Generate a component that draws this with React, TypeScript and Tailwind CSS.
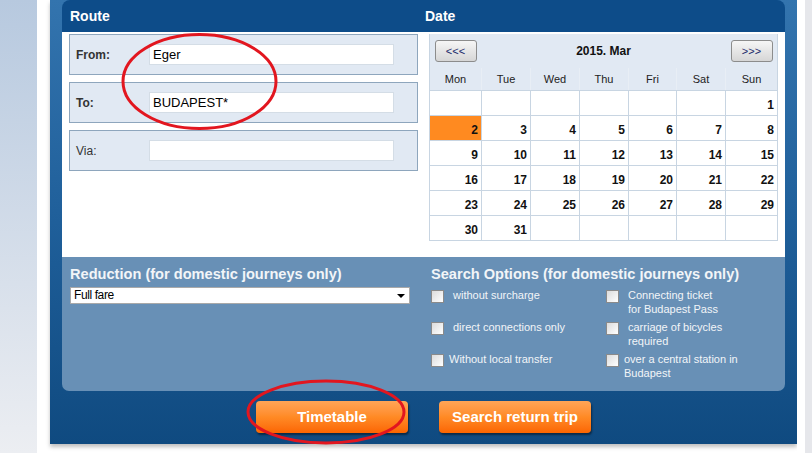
import React from 'react';

const days = ['Mon', 'Tue', 'Wed', 'Thu', 'Fri', 'Sat', 'Sun'];

const cells: (number | null)[] = [
  null, null, null, null, null, null, 1,
  2, 3, 4, 5, 6, 7, 8,
  9, 10, 11, 12, 13, 14, 15,
  16, 17, 18, 19, 20, 21, 22,
  23, 24, 25, 26, 27, 28, 29,
  30, 31, null, null, null, null, null,
];

const RouteBox = ({ label, value, bold }: { label: string; value: string; bold?: boolean }) => (
  <div className="h-[41px] border border-[#8ea6bd] bg-[#e1e9f3] flex items-center">
    <span className={`w-[79px] pl-[6px] text-[12px] text-[#333] ${bold ? 'font-bold' : ''}`}>{label}</span>
    <div className="w-[245px] h-[21px] bg-white border border-[#d4dde6] flex items-center pl-[3px] text-[13px] text-black">
      {value}
    </div>
  </div>
);

const Checkbox = () => (
  <span className="block mt-[3px] w-[13px] h-[13px] shrink-0 border border-[#8a8a8a] bg-linear-to-br from-[#dcdcdc] to-[#ffffff]" />
);

const Option = ({ lines, ml }: { lines: string[]; ml: string }) => (
  <div className="flex items-start">
    <Checkbox />
    <div className={`${ml} mt-[1px] text-[11px] leading-[14px] text-[#f2f5f8]`}>
      {lines.map((l) => (
        <div key={l}>{l}</div>
      ))}
    </div>
  </div>
);

const OrangeButton = ({ children }: { children: React.ReactNode }) => (
  <button className="w-[152px] h-[32px] rounded-[4px] bg-linear-to-b from-[#ffa556] via-[#ff8a24] to-[#fb6500] text-white font-bold text-[15px] shadow-[1px_2px_2px_rgba(0,0,0,0.45)]">
    {children}
  </button>
);

export default function App() {
  return (
    <div className="relative w-[812px] h-[453px] flex bg-white overflow-hidden font-['Liberation_Sans',Arial,sans-serif]">
      <div className="w-[37px] h-full bg-linear-to-b from-[#b7c9df] to-[#eceef2]" />
      <div className="w-[13px] h-full bg-white" />

      <div className="w-[747px] h-[444px] flex flex-col bg-linear-to-b from-[#3374ae] via-[#1f5f9a] to-[#0f4a80] shadow-[0_3px_4px_rgba(0,0,0,0.25)]">
        <div className="mx-[12px]">
          <div className="h-[32px] bg-[#0d4c89] rounded-t-[8px] grid grid-cols-[359px_1fr] text-white font-bold text-[14px]">
            <div className="pl-[8px] pt-[6px]">Route</div>
            <div className="pl-[4px] pt-[6px]">Date</div>
          </div>

          <div className="h-[225px] bg-white grid grid-cols-[359px_1fr]">
            <div className="pl-[7px] pr-[3px] pt-[2px] flex flex-col gap-[7px]">
              <RouteBox label="From:" value="Eger" bold />
              <RouteBox label="To:" value="BUDAPEST*" bold />
              <RouteBox label="Via:" value="" />
            </div>

            <div className="pl-[8px] pt-[2px]">
              <div className="w-[349px] border border-[#c8d5e2] border-t-0">
                <div className="h-[34px] bg-[#e1e9f3] grid grid-cols-[51px_245px_51px] items-center">
                  <button className="mx-auto w-[42px] h-[22px] rounded-[3px] border border-[#8c8c8c] bg-linear-to-b from-[#f6f6f6] to-[#d6d6d6] text-[11px] text-[#1a2a6a] leading-none">
                    &lt;&lt;&lt;
                  </button>
                  <div className="text-center font-bold text-[12px] text-[#111]">2015. Mar</div>
                  <button className="mx-auto w-[42px] h-[22px] rounded-[3px] border border-[#8c8c8c] bg-linear-to-b from-[#f6f6f6] to-[#d6d6d6] text-[11px] text-[#1a2a6a] leading-none">
                    &gt;&gt;&gt;
                  </button>
                </div>
                <div className="grid grid-cols-[51px_49px_49px_49px_48px_49px_52px] h-[22px] bg-[#e1e9f3]">
                  {days.map((d) => (
                    <div key={d} className="flex items-center justify-center text-[11px] text-[#222] border-l border-[#e8eef5] first:border-l-0">
                      {d}
                    </div>
                  ))}
                </div>
                <div className="grid grid-cols-[51px_49px_49px_49px_48px_49px_52px]">
                  {cells.map((c, i) => (
                    <div
                      key={i}
                      className={`h-[25px] flex items-end justify-end pr-[3px] pb-[1px] font-bold text-[12px] text-[#111] border-t border-[#c8d5e2] ${i % 7 === 0 ? '' : 'border-l'} ${c === 2 ? 'bg-[#ff8a20]' : 'bg-white'}`}
                    >
                      {c ?? ''}
                    </div>
                  ))}
                </div>
              </div>
            </div>
          </div>

          <div className="h-[134px] bg-[#6890b6] rounded-b-[7px] grid grid-cols-[359px_1fr]">
            <div className="pl-[8px] pt-[7px]">
              <div className="font-bold text-[14.6px] text-[#f2f5f8]">Reduction (for domestic journeys only)</div>
              <div className="mt-[1px] w-[340px] h-[17px] bg-white border border-[#a9a9a9] flex items-center justify-between pl-[3px] pr-[4px] text-[12px] text-black">
                <span className="tracking-[-0.4px]">Full fare</span>
                <span className="w-0 h-0 border-l-[4px] border-r-[4px] border-t-[4px] border-l-transparent border-r-transparent border-t-black mt-[2px]" />
              </div>
            </div>
            <div className="pl-[10px] pt-[7px]">
              <div className="font-bold text-[14.6px] text-[#f2f5f8]">Search Options (for domestic journeys only)</div>
              <div className="mt-[1px] grid grid-cols-[175px_1fr] gap-y-[3px]">
                <div className="h-[28px]"><Option lines={['without surcharge']} ml="ml-[9px]" /></div>
                <Option lines={['Connecting ticket', 'for Budapest Pass']} ml="ml-[9px]" />
                <div className="h-[28px]"><Option lines={['direct connections only']} ml="ml-[9px]" /></div>
                <Option lines={['carriage of bicycles', 'required']} ml="ml-[9px]" />
                <Option lines={['Without local transfer']} ml="ml-[5px]" />
                <Option lines={['over a central station in', 'Budapest']} ml="ml-[5px]" />
              </div>
            </div>
          </div>
        </div>

        <div className="flex-1 flex items-start gap-[31px] pl-[206px] pt-[10px]">
          <OrangeButton>Timetable</OrangeButton>
          <OrangeButton>Search return trip</OrangeButton>
        </div>
      </div>

      <div className="w-[8px] h-full bg-white" />
      <div className="flex-1 h-full bg-[#e6e7eb]" />

      <svg className="absolute left-0 top-0 pointer-events-none" width="812" height="453">
        <ellipse cx="199.5" cy="81.5" rx="76.5" ry="47" fill="none" stroke="#e2161f" strokeWidth="3" />
        <ellipse cx="326" cy="412" rx="78" ry="31" fill="none" stroke="#e2161f" strokeWidth="3" />
      </svg>
    </div>
  );
}
